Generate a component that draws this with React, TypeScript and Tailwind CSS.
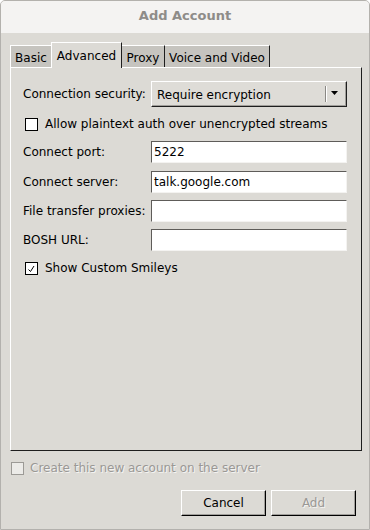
import React from 'react';

const Check = ({ checked, disabled }: { checked?: boolean; disabled?: boolean }) => (
  <div
    className={`w-[13px] h-[13px] flex items-center justify-center border ${
      disabled ? 'border-[#9c9a96] bg-[#ecebe8]' : 'border-black bg-white'
    }`}
  >
    {checked && (
      <svg width="11" height="11" viewBox="0 0 11 11">
        <path d="M2.5 6.5 L4.5 8.5 L8 3" fill="none" stroke="#000" strokeWidth="1" />
      </svg>
    )}
  </div>
);

const Field = ({ label, value, mt }: { label: string; value?: string; mt: string }) => (
  <div className={`flex items-center h-[22px] ${mt}`}>
    <div className="w-[128px] text-black">{label}</div>
    <div className="w-[196px] h-[22px] bg-white border border-t-[#5e5c59] border-l-[#5e5c59] border-b-[#f4f3f1] border-r-[#f4f3f1] flex items-center pl-[2px] text-black">
      {value}
    </div>
  </div>
);

const tabs = [
  { name: 'Basic', w: 'w-[41px]', active: false, edge: 'border-r-0' },
  { name: 'Advanced', w: 'w-[71px]', active: true, edge: '' },
  { name: 'Proxy', w: 'w-[43px]', active: false, edge: 'border-l-0' },
  { name: 'Voice and Video', w: 'w-[105px]', active: false, edge: 'border-l-0' },
];

export default function App() {
  return (
    <div className="w-[370px] h-[530px] bg-[#dcdad5] border border-[#b3b1ad] rounded-t-[5px] overflow-hidden flex flex-col text-[12px] font-['DejaVu_Sans','Liberation_Sans',sans-serif]">
      {/* Title bar */}
      <div className="h-[32px] bg-[#f4f3f2] flex items-center justify-center pb-[2px] text-[13px] font-bold text-[#8e8c89]">
        Add Account
      </div>

      <div className="pl-[9px] pr-[7px] pt-[9px] flex flex-col">
        {/* Tabs */}
        <div className="flex items-end h-[25px]">
          {tabs.map((t) =>
            t.active ? (
              <div
                key={t.name}
                className={`${t.w} h-[26px] -mb-px relative z-10 bg-[#dcdad5] border-t border-l border-r border-t-white border-l-white border-r-[#1e1e1e] flex items-start justify-center pt-[4px] text-black`}
              >
                {t.name}
              </div>
            ) : (
              <div
                key={t.name}
                className={`${t.w} h-[22px] bg-[#c6c4bf] border-t border-l border-r border-t-white border-l-white border-r-[#1e1e1e] ${t.edge} flex items-center justify-center pt-[2px] text-black`}
              >
                {t.name}
              </div>
            )
          )}
        </div>

        {/* Panel */}
        <div className="h-[384px] border border-t-white border-l-white border-r-[#1e1e1e] border-b-[#1e1e1e] pl-[12px] pt-[13px] flex flex-col">
          <div className="flex items-center h-[26px]">
            <div className="w-[128px] text-black">Connection security:</div>
            <div className="w-[196px] h-[26px] bg-[#dedcd7] border border-t-white border-l-white border-r-[#1e1e1e] border-b-[#1e1e1e] shadow-[inset_-1px_-1px_0_#a09e9a] flex items-center">
              <div className="flex-1 pl-[5px] pt-px text-black">Require encryption</div>
              <div className="w-px h-[16px] bg-[#8a8884]" />
              <div className="w-px h-[16px] bg-white mr-[4px]" />
              <svg width="7" height="4" viewBox="0 0 7 4" className="mr-[8px] mb-[2px]">
                <path d="M0 0 H7 L3.5 4 Z" fill="#000" />
              </svg>
            </div>
          </div>

          <div className="flex items-center h-[16px] mt-[9px] ml-[2px] gap-[7px] text-black">
            <Check />
            <span>Allow plaintext auth over unencrypted streams</span>
          </div>

          <Field label="Connect port:" value="5222" mt="mt-[9px]" />
          <Field label="Connect server:" value="talk.google.com" mt="mt-[8px]" />
          <Field label="File transfer proxies:" mt="mt-[7px]" />
          <Field label="BOSH URL:" mt="mt-[7px]" />

          <div className="flex items-center h-[16px] mt-[9px] ml-[2px] gap-[7px] text-black">
            <Check checked />
            <span>Show Custom Smileys</span>
          </div>
        </div>

        {/* Bottom */}
        <div className="flex items-center h-[16px] mt-[9px] ml-[1px] gap-[6px] text-[#9a9895] [text-shadow:1px_1px_0_#f4f3f1]">
          <Check disabled />
          <span>Create this new account on the server</span>
        </div>

        <div className="flex justify-end gap-[5px] mt-[14px] pr-[6px]">
          <button className="w-[85px] h-[26px] bg-[#dcdad5] border border-t-white border-l-white border-r-black border-b-black shadow-[inset_-1px_-1px_0_#a09e9a] text-black">
            Cancel
          </button>
          <button className="w-[85px] h-[26px] bg-[#dcdad5] border border-t-white border-l-white border-r-black border-b-black shadow-[inset_-1px_-1px_0_#a09e9a] text-[#9a9895] [text-shadow:1px_1px_0_#f4f3f1]">
            Add
          </button>
        </div>
      </div>
    </div>
  );
}
